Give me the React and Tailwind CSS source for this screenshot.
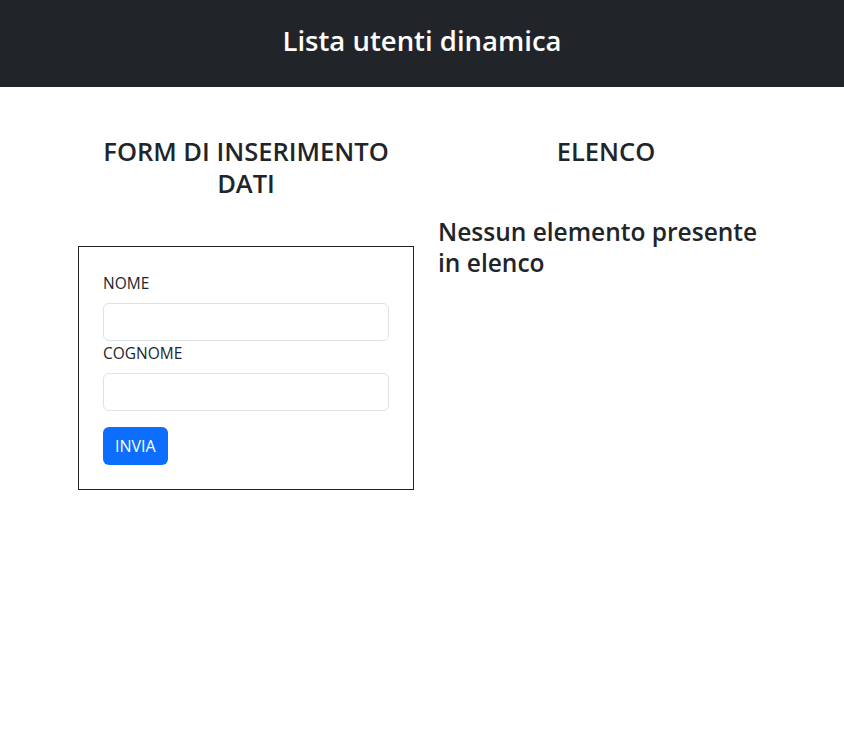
export default function App() {
  return (
    <div className="min-h-[739px] bg-white text-[#212529] font-['Open_Sans','Noto_Sans',sans-serif]">
      <header className="h-[87px] bg-[#212529] flex items-center justify-center pb-[6px]">
        <h2 className="text-[27.5px] leading-[34px] font-semibold text-white">Lista utenti dinamica</h2>
      </header>

      <div className="w-[696px] ml-[78px] grid grid-cols-2 gap-x-[24px] mt-[48px]">
        {/* colonna form */}
        <div>
          <h3 className="px-[20px] text-[25.5px] leading-[32px] font-semibold text-center">FORM DI INSERIMENTO DATI</h3>
          <form className="mt-[47px] border border-[#222] p-6">
            <label className="block text-[15.5px] leading-[24px]">NOME</label>
            <input className="mt-2 block w-full h-[38px] border border-[#dee2e6] rounded-md px-3" />
            <label className="block text-[15.5px] leading-[24px]">COGNOME</label>
            <input className="mt-2 block w-full h-[38px] border border-[#dee2e6] rounded-md px-3" />
            <button
              type="button"
              className="mt-4 h-[38px] px-3 rounded-md bg-[#0d6efd] text-white text-[16px]"
            >
              INVIA
            </button>
          </form>
        </div>

        {/* colonna elenco */}
        <div>
          <h3 className="text-[25.5px] leading-[32px] font-semibold text-center">ELENCO</h3>
          <h3 className="mt-[49px] text-[24.5px] leading-[31px] font-semibold">Nessun elemento presente in elenco</h3>
        </div>
      </div>
    </div>
  )
}
